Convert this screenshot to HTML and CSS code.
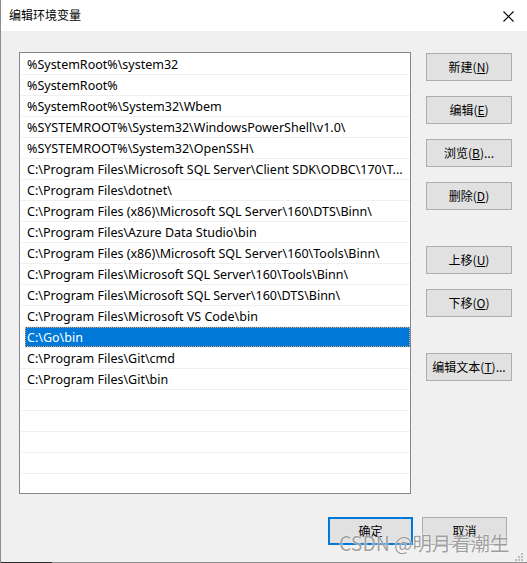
FILE: index.html
```html
<!DOCTYPE html>
<html lang="zh-CN">
<head>
<meta charset="utf-8">
<title>编辑环境变量</title>
<link rel="stylesheet" href="styles.css">
</head>
<body>
<div class="window">
  <div class="titlebar">
    <span class="title">编辑环境变量</span>
    <svg class="close" width="12" height="12" viewBox="0 0 12 12"><path d="M0.5 0.5 L10.5 10.5 M10.5 0.5 L0.5 10.5" stroke="#000" stroke-width="1.1" fill="none"/></svg>
  </div>
  <div class="body">
    <div class="main">
      <div class="list">
        <div class="row"><span class="label">%SystemRoot%\system32</span></div>
        <div class="row"><span class="label">%SystemRoot%</span></div>
        <div class="row"><span class="label">%SystemRoot%\System32\Wbem</span></div>
        <div class="row"><span class="label">%SYSTEMROOT%\System32\WindowsPowerShell\v1.0\</span></div>
        <div class="row"><span class="label">%SYSTEMROOT%\System32\OpenSSH\</span></div>
        <div class="row"><span class="label">C:\Program Files\Microsoft SQL Server\Client SDK\ODBC\170\T...</span></div>
        <div class="row"><span class="label">C:\Program Files\dotnet\</span></div>
        <div class="row"><span class="label">C:\Program Files (x86)\Microsoft SQL Server\160\DTS\Binn\</span></div>
        <div class="row"><span class="label">C:\Program Files\Azure Data Studio\bin</span></div>
        <div class="row"><span class="label">C:\Program Files (x86)\Microsoft SQL Server\160\Tools\Binn\</span></div>
        <div class="row"><span class="label">C:\Program Files\Microsoft SQL Server\160\Tools\Binn\</span></div>
        <div class="row"><span class="label">C:\Program Files\Microsoft SQL Server\160\DTS\Binn\</span></div>
        <div class="row"><span class="label">C:\Program Files\Microsoft VS Code\bin</span></div>
        <div class="row selected"><span class="label">C:\Go\bin</span></div>
        <div class="row"><span class="label">C:\Program Files\Git\cmd</span></div>
        <div class="row"><span class="label">C:\Program Files\Git\bin</span></div>
        <div class="row"><span class="label"></span></div>
        <div class="row"><span class="label"></span></div>
        <div class="row"><span class="label"></span></div>
        <div class="row"><span class="label"></span></div>
        <div class="row"><span class="label"></span></div>
      </div>
      <div class="side">
        <div class="group">
          <button class="btn">新建(<u>N</u>)</button>
          <button class="btn">编辑(<u>E</u>)</button>
          <button class="btn">浏览(<u>B</u>)...</button>
          <button class="btn">删除(<u>D</u>)</button>
        </div>
        <div class="group">
          <button class="btn">上移(<u>U</u>)</button>
          <button class="btn">下移(<u>O</u>)</button>
        </div>
        <div class="group">
          <button class="btn">编辑文本(<u>T</u>)...</button>
        </div>
      </div>
    </div>
    <div class="footer">
      <button class="btn btn-wide default">确定</button>
      <button class="btn btn-wide">取消</button>
    </div>
  </div>
  <div class="bottom-edge"><span class="dark"></span><span class="light"></span></div>
  <div class="watermark">CSDN @明月看潮生</div>
  <svg class="grip" width="10" height="10" viewBox="0 0 10 10">
    <rect x="8" y="2" width="2" height="2" fill="#bcbcbc"/>
    <rect x="5" y="5" width="2" height="2" fill="#bcbcbc"/>
    <rect x="8" y="5" width="2" height="2" fill="#bcbcbc"/>
    <rect x="2" y="8" width="2" height="2" fill="#bcbcbc"/>
    <rect x="5" y="8" width="2" height="2" fill="#bcbcbc"/>
    <rect x="8" y="8" width="2" height="2" fill="#bcbcbc"/>
  </svg>
</div>
</body>
</html>
```
FILE: styles.css
```css
html, body {
  margin: 0;
  padding: 0;
  background: #f0f0f0;
}
body {
  font-family: "Noto Sans", "Noto Sans CJK SC", sans-serif;
  font-size: 12px;
  color: #000;
}
.window {
  position: relative;
  width: 527px;
  height: 563px;
  box-sizing: border-box;
  border-left: 1px solid #8c8c8c;
  background: #f0f0f0;
  overflow: hidden;
  display: flex;
  flex-direction: column;
}
.titlebar {
  height: 31px;
  flex: none;
  background: #fff;
  display: flex;
  align-items: center;
  justify-content: space-between;
  padding: 0 12px 0 8px;
}
.title {
  font-family: "Noto Sans CJK SC", sans-serif;
  font-size: 12px;
  line-height: 16px;
  margin-top: -1px;
}
.close {
  display: block;
  margin-top: 2px;
}
.body {
  flex: 1;
  padding: 21px 0 0 18px;
  display: flex;
  flex-direction: column;
}
.main {
  display: flex;
  align-items: flex-start;
}
.list {
  width: 392px;
  height: 442px;
  box-sizing: border-box;
  border: 1px solid #828790;
  background: #fff;
  padding-top: 1px;
  overflow: hidden;
}
.row {
  height: 21px;
  box-sizing: border-box;
  margin-left: 1px;
  border-bottom: 1px solid #f0f0f0;
  display: flex;
}
.label {
  display: block;
  flex: 1;
  margin-left: 4px;
  padding-left: 2px;
  height: 20px;
  line-height: 21px;
  font-size: 12.5px;
  white-space: nowrap;
  overflow: hidden;
}
.row.selected .label {
  background: #0078d7;
  color: #fff;
  box-sizing: border-box;
  outline: 1px dotted #e8a060;
  outline-offset: -1px;
}
.side {
  margin-left: 15px;
  padding-top: 1px;
  display: flex;
  flex-direction: column;
  gap: 36px;
}
.group {
  display: flex;
  flex-direction: column;
  gap: 15px;
}
.btn {
  width: 86px;
  height: 28px;
  box-sizing: border-box;
  border: 1px solid #adadad;
  background: #e1e1e1;
  font-family: "Noto Sans CJK SC", sans-serif;
  font-size: 12px;
  color: #000;
  padding: 0;
  margin: 0;
  line-height: 24px;
  text-align: center;
}
.btn u {
  text-underline-offset: 1px;
}
.footer {
  display: flex;
  justify-content: flex-end;
  gap: 9px;
  padding-right: 20px;
  margin-top: 23px;
}
.btn-wide {
  width: 85px;
}
.btn.default {
  border: 2px solid #0078d7;
}
.bottom-edge {
  height: 1px;
  flex: none;
  display: flex;
}
.bottom-edge .dark {
  width: 51px;
  background: #2b2b2b;
}
.bottom-edge .light {
  flex: 1;
  background: #8c8c8c;
}
.watermark {
  position: absolute;
  left: 338px;
  top: 530px;
  font-family: "Noto Sans CJK SC", sans-serif;
  font-size: 19.4px;
  line-height: 26px;
  color: rgba(95, 95, 95, 0.62);
  text-shadow: 0 0 1px rgba(255, 255, 255, 1), 0 0 2px rgba(255, 255, 255, 0.8);
  white-space: nowrap;
}
.grip {
  position: absolute;
  right: 4px;
  bottom: 2px;
}
```
